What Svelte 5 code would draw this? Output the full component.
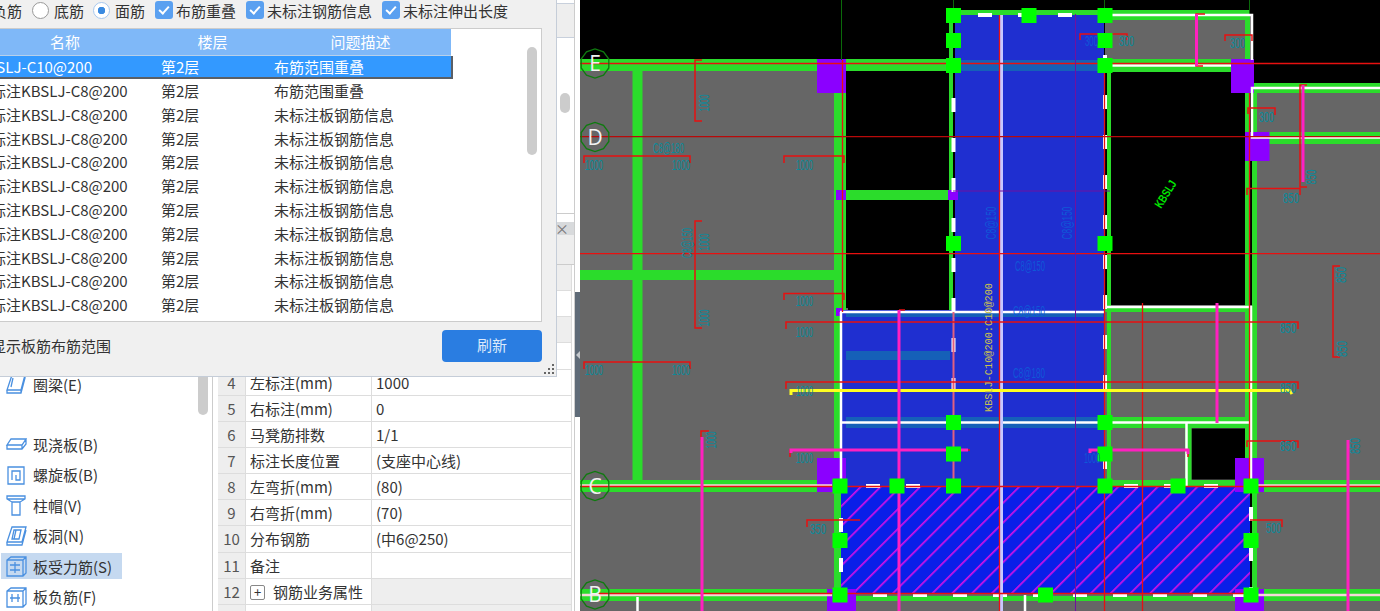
<script>
	const issues = [
		{ name: 'KBSLJ-C10@200', floor: '第2层', desc: '布筋范围重叠', active: true },
		{ name: '未标注KBSLJ-C8@200', floor: '第2层', desc: '布筋范围重叠' },
		...Array.from({ length: 9 }, () => ({ name: '未标注KBSLJ-C8@200', floor: '第2层', desc: '未标注板钢筋信息' }))
	];

	// rows 1-3 sit behind the dialog, only their stripes show
	const props = [
		{ no: '', name: '', value: '' },
		{ no: '', name: '', value: '', ro: true },
		{ no: '', name: '', value: '' },
		{ no: 4, name: '左标注(mm)', value: '1000' },
		{ no: 5, name: '右标注(mm)', value: '0' },
		{ no: 6, name: '马凳筋排数', value: '1/1' },
		{ no: 7, name: '标注长度位置', value: '(支座中心线)' },
		{ no: 8, name: '左弯折(mm)', value: '(80)' },
		{ no: 9, name: '右弯折(mm)', value: '(70)' },
		{ no: 10, name: '分布钢筋', value: '(中6@250)' },
		{ no: 11, name: '备注', value: '' },
		{ no: 12, name: '钢筋业务属性', value: '', group: true },
		{ no: '', name: '', value: '', group: true }
	];

	// canvas shapes are [x, y, w, h] in screen coordinates
	const gray = [
		[580, 60, 268, 551], [1105, 15, 147, 50], [1105, 305, 147, 181],
		[1252, 88, 128, 523], [840, 594, 540, 17]
	];
	const black = [[846, 71, 103, 237], [1111, 72, 134, 228], [1191.5, 428.5, 53.5, 51]];
	const bands = [[955, 60, 148, 11], [846, 351, 104, 9], [846, 417, 257, 11], [846, 312, 257, 5]];
	const green = [
		[580, 59, 368, 12], [632.5, 71, 10, 409], [580, 270, 254, 10], [834, 93, 12, 217], [834, 310, 7, 290],
		[846, 190, 103, 10], [949, 10, 4, 300], [580, 480, 237, 12], [580, 589, 247, 12],
		[1105, 10, 145, 10], [1245, 10, 5, 50], [1105, 59, 126, 13], [1107, 72, 4, 415],
		[1245, 93, 5, 393], [1252, 93, 5, 507], [1253, 83, 127, 10], [1269, 132, 111, 12], [1105, 306, 147, 6],
		[1111, 417, 134, 11], [1185, 428, 6.5, 55], [1105, 480, 147, 6], [1257, 480, 123, 12],
		[1257, 589, 123, 12], [953, 10, 152, 5], [856, 596, 400, 5]
	];
	const purple = [
		[817, 59, 29, 34], [836, 190, 10, 10], [948, 190, 10, 10], [1231, 59, 23, 34],
		[1245, 132, 24.5, 29], [817, 458, 29, 34], [827, 589, 29, 22], [1235, 458, 29, 34],
		[1235, 589, 29, 22], [836, 308, 6, 8]
	];
	const squares = [
		[953.5, 15.5], [1029, 15.5], [1105, 15.5], [953.5, 40.5], [1105, 40.5], [953.5, 65.5],
		[1105, 65.5], [953.5, 243.5], [1105, 243.5], [953.5, 422.5], [1105, 422.5], [953.5, 454],
		[1105, 454], [840, 486], [897, 486], [953.5, 486], [1105, 486], [1178, 486], [1251, 486],
		[840, 540.5], [1251, 540.5], [840, 595], [1045.5, 595], [1251, 595]
	];
	// red dimension brackets as polylines
	const brackets = [
		'702,60 695,60 695,121 702,121', '702,221 695,221 695,328 702,328',
		'584,163 584,156 690,156 690,163', '784,163 784,156 844,156 844,163',
		'784,300 784,293.5 844,293.5 844,300', '584,369 584,362 690,362 690,369',
		'786,329 786,322 1298,322 1298,329', '786,389 786,382 1298,382 1298,389',
		'807,527 807,520 860,520', '1250,520 1282,520 1282,527', '1247,447 1247,441 1298,441 1298,448',
		'1080,40 1080,34 1127,34 1127,40', '1225,41 1225,35 1252,35 1252,41',
		'1248,114 1248,108 1275,108 1275,115', '1247,195 1247,188.5 1300,188.5 1300,195',
		'1340,266 1333,266 1333,357 1340,357', '1307,85 1300,85 1300,187 1307,187',
		'1205,14 1196,14 1196,66 1203,66', '709,431 701,431 701,440', '905,310 899,310',
		'790,457 790,450 970,450', '1188,457 1188,450 1090,450'
	];
	const magenta = [
		'1196.5,14 1196.5,66', '1303,85 1303,182', '1217,303 1217,423', '1348,440 1348,611',
		'702,437 702,611', '899,310 899,611', '791,453 791,450 968,450', '1090,453 1090,450 1188,450 1188,454'
	];
	const labels = [
		{ t: 'C8@180', x: 653, y: 153, w: 31, c: 'teal' },
		{ t: '1000', x: 585, y: 170, w: 18, c: 'teal' },
		{ t: '1000', x: 672, y: 170, w: 18, c: 'teal' },
		{ t: '1000', x: 796, y: 170, w: 17, c: 'teal' },
		{ t: '1000', x: 796, y: 306, w: 17, c: 'teal' },
		{ t: '1000', x: 796, y: 337, w: 17, c: 'teal' },
		{ t: '1000', x: 585, y: 375, w: 18, c: 'teal' },
		{ t: '1000', x: 672, y: 375, w: 18, c: 'teal' },
		{ t: '1000', x: 796, y: 396, w: 17, c: 'teal' },
		{ t: '1000', x: 796, y: 463, w: 17, c: 'teal' },
		{ t: '350', x: 810, y: 534, w: 16, c: 'teal' },
		{ t: '300', x: 1119, y: 46, w: 15, c: 'teal' },
		{ t: '300', x: 1085, y: 46, w: 13, c: 'blue' },
		{ t: '300', x: 1230, y: 48, w: 15, c: 'teal' },
		{ t: '300', x: 1259, y: 122, w: 15, c: 'teal' },
		{ t: '850', x: 1283, y: 203, w: 16, c: 'teal' },
		{ t: '850', x: 1280, y: 333, w: 16, c: 'teal' },
		{ t: '850', x: 1280, y: 393, w: 16, c: 'teal' },
		{ t: '850', x: 1280, y: 451, w: 16, c: 'teal' },
		{ t: '500', x: 1266, y: 533, w: 15, c: 'teal' },
		{ t: 'C8@150', x: 1015, y: 271, w: 30, c: 'blue' },
		{ t: 'C8@180', x: 1013, y: 378, w: 32, c: 'blue' },
		{ t: 'C8@150', x: 1013, y: 316, w: 32, c: 'blue' },
		{ t: '1000', x: 1084, y: 463, w: 16, c: 'blue' }
	];
	const sideLabels = [
		{ t: '1000', cx: 704, cy: 103, w: 17, c: 'teal' },
		{ t: 'C8@150', cx: 687, cy: 243, w: 30, c: 'teal' },
		{ t: '1000', cx: 704, cy: 242, w: 17, c: 'teal' },
		{ t: '1000', cx: 704, cy: 318, w: 17, c: 'teal' },
		{ t: '1000', cx: 711, cy: 440, w: 17, c: 'teal' },
		{ t: '850', cx: 1311, cy: 177, w: 15, c: 'teal' },
		{ t: '850', cx: 1341, cy: 275, w: 16, c: 'teal' },
		{ t: '850', cx: 1342, cy: 349, w: 16, c: 'teal' },
		{ t: '850', cx: 1355, cy: 446, w: 16, c: 'teal' },
		{ t: 'C8@150', cx: 991, cy: 223, w: 33, c: 'blue' },
		{ t: 'C8@150', cx: 1067, cy: 223, w: 33, c: 'blue' }
	];
	const axes = [
		{ t: 'E', y: 63.5 },
		{ t: 'D', y: 137 },
		{ t: 'C', y: 486 },
		{ t: 'B', y: 594.5 }
	];

	const ring = (cy) =>
		Array.from({ length: 10 }, (_, i) => {
			const a = (i * Math.PI) / 5 + Math.PI / 10;
			return `${(595 + 14.5 * Math.cos(a)).toFixed(1)},${(cy + 14.5 * Math.sin(a)).toFixed(1)}`;
		}).join(' ');
</script>

{#snippet slab(d)}
	<svg class="nav-icon" viewBox="0 0 22 22" aria-hidden="true"><path d={d} /></svg>
{/snippet}

<div class="app">
	<div class="left">
		<aside class="sidebar">
			<div class="nav-item">
				{@render slab('M7 2h13l-4 15H2zM2 17v3h14l4-15v-3M16 17v3M8 5l-2 9')}
				<span>圈梁(E)</span>
			</div>
			<div class="nav-item gap">
				{@render slab('M6 6h15l-4 6H2zM2 12v4h15l4-5V6M17 12v4')}
				<span>现浇板(B)</span>
			</div>
			<div class="nav-item">
				{@render slab('M3 3h16v17H3zM7 16V7h8v9h-4v-5')}
				<span>螺旋板(B)</span>
			</div>
			<div class="nav-item">
				{@render slab('M2 2h18v3l-5 3v13H7V8L2 5zM2 5h18M7 8h8')}
				<span>柱帽(V)</span>
			</div>
			<div class="nav-item">
				{@render slab('M7 2h14l-4 15H2zM2 17v3h15l4-15M9 5h7l-2 9H7zM11 5l-2 9')}
				<span>板洞(N)</span>
			</div>
			<div class="nav-item active">
				{@render slab('M2 5l4-3h15v16l-3 3H2zM2 5h16v16M18 5l3-3M5 10h10M5 15h10M10 7v11')}
				<span>板受力筋(S)</span>
			</div>
			<div class="nav-item">
				{@render slab('M2 5l4-3h15v16l-3 3H2zM2 5h16v16M18 5l3-3M5 12h10M7 8v8M13 8v8')}
				<span>板负筋(F)</span>
			</div>
			<div class="nav-thumb"></div>
		</aside>

		<main class="main">
			<section class="top-panel">
				<div class="top-head"></div>
				<div class="top-body"><div class="top-thumb"></div></div>
			</section>
			<div class="dock-tab"><span>×</span></div>
			<div class="prop-tools"></div>
			<div class="prop-table">
				<div class="prop-row head">
					<div class="no"></div>
					<div class="name"></div>
					<div class="value"></div>
				</div>
				{#each props as row}
					<div class="prop-row" class:group={row.group} class:ro={row.ro}>
						<div class="no">{row.no}</div>
						<div class="name">
							{#if row.group}<span class="plus">+</span>{/if}{row.name}
						</div>
						<div class="value">{row.value}</div>
					</div>
				{/each}
			</div>
		</main>

		<div class="edge">
			<div class="splitter"><i></i></div>
		</div>

		<div class="dialog">
			<div class="opts">
				<span class="clip-label">负筋</span>
				<label class="opt"><i class="radio"></i>底筋</label>
				<label class="opt"><i class="radio on"></i>面筋</label>
				<label class="opt"><i class="check"></i>布筋重叠</label>
				<label class="opt"><i class="check"></i>未标注钢筋信息</label>
				<label class="opt"><i class="check"></i>未标注伸出长度</label>
			</div>

			<div class="issues">
				<div class="issue-row issue-head">
					<div>名称</div>
					<div>楼层</div>
					<div>问题描述</div>
				</div>
				{#each issues as it}
					<div class="issue-row" class:active={it.active}>
						<div class="cell-name">{it.name}</div>
						<div class="cell-floor">{it.floor}</div>
						<div class="cell-desc">{it.desc}</div>
					</div>
				{/each}
				<div class="issue-thumb"></div>
			</div>

			<div class="foot">
				<span class="hint">显示板筋布筋范围</span>
				<button class="refresh">刷新</button>
			</div>

			<svg class="grip" width="11" height="11" viewBox="0 0 11 11" aria-hidden="true">
				<rect x="8" y="0" width="2" height="2" />
				<rect x="4" y="4" width="2" height="2" />
				<rect x="8" y="4" width="2" height="2" />
				<rect x="0" y="8" width="2" height="2" />
				<rect x="4" y="8" width="2" height="2" />
				<rect x="8" y="8" width="2" height="2" />
			</svg>
		</div>
	</div>

	<svg class="cad" width="800" height="611" viewBox="580 0 800 611" aria-label="板筋平面图">
		<defs>
			<pattern id="hatch" width="14" height="14" patternUnits="userSpaceOnUse" patternTransform="rotate(-45 840 594)">
				<rect width="14" height="14" fill="#0a1fe8" />
				<rect x="0" y="0" width="14" height="1.7" fill="#d010e8" />
			</pattern>
		</defs>

		{#each gray as [x, y, w, h]}<rect {x} {y} width={w} height={h} fill="#666" />{/each}
		{#each black as [x, y, w, h]}<rect {x} {y} width={w} height={h} fill="#000" />{/each}

		<rect x="955" y="14" width="149" height="298" fill="#1f2fd0" />
		<rect x="842" y="310" width="263" height="176" fill="#1f2fd0" />
		{#each bands as [x, y, w, h]}<rect {x} {y} width={w} height={h} fill="#1560b8" />{/each}
		<rect x="841" y="486" width="409" height="108" fill="url(#hatch)" />

		{#each green as [x, y, w, h]}<rect {x} {y} width={w} height={h} fill="#2bdc2b" />{/each}
		{#each purple as [x, y, w, h]}<rect {x} {y} width={w} height={h} fill="#8b00ff" />{/each}

		<g class="thin-dark">
			<line x1="841.5" y1="0" x2="841.5" y2="60" />
			<line x1="953.5" y1="0" x2="953.5" y2="10" />
			<line x1="1104.5" y1="0" x2="1104.5" y2="10" />
			<line x1="1249.5" y1="0" x2="1249.5" y2="15" />
		</g>

		<g class="white">
			<polyline points="1105,15 1252,15 1252,60" />
			<line x1="1112" y1="65.5" x2="1231" y2="65.5" />
			<polyline points="1380,88 1252,88 1252,137.5 1380,137.5" />
			<polyline points="1105,307 1251,307 1251,486" />
			<line x1="1112" y1="422.5" x2="1251" y2="422.5" />
			<polyline points="1186.5,422.5 1186.5,486" />
			<line x1="840" y1="312" x2="1105" y2="312" />
			<line x1="841" y1="422.5" x2="1105" y2="422.5" />
			<line x1="841" y1="312" x2="841" y2="486" />
			<line x1="580" y1="485.5" x2="832" y2="485.5" class="soft" />
			<line x1="580" y1="595" x2="832" y2="595" class="soft" />
			<line x1="1258" y1="485.5" x2="1380" y2="485.5" class="soft" />
			<line x1="1258" y1="595" x2="1380" y2="595" class="soft" />
			<line x1="637.5" y1="597" x2="637.5" y2="611" />
			<line x1="1025" y1="595" x2="1025" y2="611" />
		</g>
		<g class="dash">
			<line x1="953.5" y1="58" x2="953.5" y2="312" />
			<line x1="1105" y1="55" x2="1105" y2="486" />
			<line x1="953.5" y1="338" x2="953.5" y2="415" />
			<line x1="978" y1="15" x2="1100" y2="15" />
			<line x1="841" y1="518" x2="841" y2="590" />
			<line x1="1251" y1="507" x2="1251" y2="590" />
			<line x1="866" y1="486" x2="925" y2="486" />
			<line x1="1124" y1="486" x2="1225" y2="486" />
			<line x1="873" y1="595" x2="1247" y2="595" />
		</g>

		<line x1="1001.5" y1="15" x2="1001.5" y2="611" class="lavender" />

		<g class="red-h">
			<line x1="580" y1="63.5" x2="1380" y2="63.5" />
			<line x1="580" y1="136.7" x2="1380" y2="136.7" class="deep" />
			<line x1="580" y1="253.7" x2="1380" y2="253.7" />
			<line x1="580" y1="486.5" x2="1380" y2="486.5" />
			<line x1="599" y1="593.5" x2="1250" y2="593.5" />
			<line x1="999.5" y1="15" x2="999.5" y2="611" />
			<line x1="1104.5" y1="65" x2="1104.5" y2="611" />
			<line x1="1142.5" y1="303" x2="1142.5" y2="611" />
			<line x1="842.5" y1="60" x2="842.5" y2="312" />
			<line x1="1249.5" y1="93" x2="1249.5" y2="486" />
			<line x1="953.5" y1="312" x2="953.5" y2="486" class="pink" />
		</g>
		<line x1="1075.5" y1="14" x2="1075.5" y2="611" class="violet" />
		<line x1="953" y1="191" x2="1110" y2="191" class="violet" />

		<polyline points="791,395 791,390.5 1290,390.5 1292,394" class="yellow" />

		{#each brackets as points}<polyline {points} class="bracket" />{/each}
		{#each magenta as points}<polyline {points} class="magenta" />{/each}

		{#each squares as [cx, cy]}
			<rect x={cx - 7.5} y={cy - 7.5} width="15" height="15" fill="#00ff00" />
		{/each}

		{#each labels as l}
			<text x={l.x} y={l.y} class="dim {l.c}" textLength={l.w} lengthAdjust="spacingAndGlyphs">{l.t}</text>
		{/each}
		{#each sideLabels as l}
			<text transform="translate({l.cx} {l.cy}) rotate(-90)" x={-l.w / 2} y="5" class="dim {l.c}" textLength={l.w} lengthAdjust="spacingAndGlyphs">{l.t}</text>
		{/each}

		<text transform="translate(992 412) rotate(-90)" class="rebar" textLength="129" lengthAdjust="spacingAndGlyphs">KBSLJ-C10@200:C10@200</text>
		<text transform="translate(1161 209) rotate(-58)" class="tag" textLength="30" lengthAdjust="spacingAndGlyphs">KBSLJ</text>

		{#each axes as a}
			<polygon points={ring(a.y)} class="axis-ring" />
			<text x="595" y={a.y + 7.5} class="axis">{a.t}</text>
		{/each}
	</svg>
</div>

<style>
	:global(body) {
		margin: 0;
	}

	.app {
		display: flex;
		width: 1380px;
		height: 611px;
		overflow: hidden;
		font-family: 'Noto Sans CJK SC', 'Liberation Sans', sans-serif;
		font-size: 15px;
		color: #333;
	}

	.left {
		position: relative;
		display: flex;
		flex: none;
		width: 580px;
		height: 611px;
		overflow: hidden;
		background: #fff;
	}

	.sidebar {
		position: relative;
		box-sizing: border-box;
		flex: none;
		width: 213px;
		padding-top: 371px;
		border-right: 1px solid #ccc;
	}

	.nav-item {
		display: flex;
		align-items: center;
		gap: 6px;
		width: 121px;
		height: 26px;
		margin: 0 0 4.5px 1px;
		padding-left: 4px;
		box-sizing: border-box;
		white-space: nowrap;
	}

	.nav-item.gap {
		margin-top: 34px;
	}

	.nav-item.active {
		background: #c5d9f0;
	}

	.nav-icon {
		flex: none;
		width: 22px;
		height: 22px;
		fill: none;
		stroke: #4a90e0;
		stroke-width: 1.3;
	}

	.nav-thumb {
		position: absolute;
		left: 198px;
		top: 340px;
		width: 10px;
		height: 75px;
		border-radius: 5px;
		background: #ccc;
	}

	.main {
		display: flex;
		flex-direction: column;
		flex: none;
		box-sizing: border-box;
		width: 362px;
		padding-left: 5px;
		border-right: 1px solid #ccc;
	}

	.top-panel {
		display: flex;
		flex-direction: column;
		flex: none;
		height: 214px;
		padding-top: 3px;
		box-sizing: border-box;
	}

	.top-head {
		height: 35px;
		flex: none;
		background: #eee;
		border-top: 1px solid #c8d0dc;
		border-bottom: 1px solid #c8d0dc;
		box-sizing: border-box;
	}

	.top-body {
		position: relative;
		flex: 1;
		border-bottom: 1px solid #ccc;
	}

	.top-thumb {
		position: absolute;
		right: 4px;
		top: 55px;
		width: 10px;
		height: 20px;
		border-radius: 5px;
		background: #ccc;
	}

	.dock-tab {
		display: flex;
		justify-content: flex-end;
		align-items: center;
		flex: none;
		height: 13px;
		margin-top: 8px;
		padding-right: 5px;
		background: #d8dadc;
		color: #777;
		font-size: 14px;
		line-height: 13px;
	}

	.prop-tools {
		flex: none;
		height: 30px;
		background: #eee;
		border-bottom: 1px solid #ccc;
		box-sizing: border-box;
	}

	.prop-table {
		width: 353px;
		border-right: 1px solid #ddd;
	}

	.prop-row {
		display: grid;
		grid-template-columns: 28px 126px 1fr;
		height: 26.15px;
		box-sizing: border-box;
		border-bottom: 1px solid #ddd;
		line-height: 25px;
		white-space: nowrap;
	}

	.prop-row.head,
	.prop-row.ro {
		background: #eee;
	}

	.prop-row.group .value {
		background: #eee;
	}

	.no {
		background: #eee;
		color: #555;
		text-align: center;
		border-right: 1px solid #ddd;
	}

	.name {
		padding-left: 4px;
		border-right: 1px solid #ddd;
	}

	.value {
		padding-left: 4px;
	}

	.plus {
		display: inline-block;
		width: 13px;
		height: 13px;
		margin: 0 8px 0 0;
		border: 1px solid #888;
		border-radius: 2px;
		font-size: 13px;
		line-height: 12px;
		text-align: center;
		vertical-align: 1px;
	}

	.edge {
		flex: none;
		width: 5px;
		background: #fff;
	}

	.splitter {
		display: flex;
		align-items: center;
		height: 125px;
		margin-top: 292px;
		background: #5f6b78;
	}

	.splitter i {
		width: 0;
		height: 0;
		margin-left: 1px;
		border-top: 4px solid transparent;
		border-bottom: 4px solid transparent;
		border-right: 4px solid #c4c8cc;
	}

	.dialog {
		position: absolute;
		left: 0;
		top: 0;
		display: flex;
		flex-direction: column;
		box-sizing: border-box;
		width: 557px;
		height: 377px;
		background: #f0f0f0;
		border-right: 1px solid #c5cdd8;
		border-bottom: 1px solid #c5cdd8;
		overflow: hidden;
	}

	.opts {
		display: flex;
		align-items: center;
		gap: 9px;
		flex: none;
		height: 20px;
		margin-bottom: 1px;
		margin-left: -8px;
		white-space: nowrap;
	}

	.clip-label {
		width: 30px;
		margin-right: 1px;
	}

	.opt {
		display: flex;
		align-items: center;
		gap: 5px;
	}

	.opt:has(.check) {
		gap: 3px;
		margin-left: 1px;
	}

	.radio {
		box-sizing: border-box;
		width: 17px;
		height: 17px;
		border: 1px solid #999;
		border-radius: 50%;
		background: #fff;
	}

	.radio.on {
		border-color: #a8c8ee;
		background: radial-gradient(circle, #3a8ae0 0 3.5px, #fff 4px);
	}

	.check {
		position: relative;
		width: 18px;
		height: 18px;
		border-radius: 3px;
		background: #5aa0f0;
	}

	.check::after {
		content: '';
		position: absolute;
		left: 6px;
		top: 3px;
		width: 4px;
		height: 8px;
		border: solid #fff;
		border-width: 0 2px 2px 0;
		transform: rotate(42deg);
	}

	.issues {
		position: relative;
		flex: none;
		box-sizing: border-box;
		width: 543px;
		height: 294px;
		margin: 7px 0 0 -1px;
		background: #fff;
		border: 1px solid #ccc;
		overflow: hidden;
	}

	.issue-row {
		display: grid;
		grid-template-columns: 180px 115px 181px;
		width: 476px;
		height: 23.8px;
		margin-left: -25px;
		line-height: 23.8px;
		white-space: nowrap;
	}

	.issue-head {
		height: 27px;
		line-height: 25px;
		background: #7fb8f8;
		color: #fff;
		text-align: center;
		border-bottom: 1px solid #b8d0ea;
		box-sizing: border-box;
	}

	.issue-row.active {
		width: 478px;
		height: 23px;
		background: #3399ff;
		color: #fff;
		box-sizing: border-box;
		border-right: 2px solid #5a5f66;
		border-bottom: 2px solid #5a5f66;
		line-height: 22px;
	}

	.issue-row.active .cell-name {
		padding-left: 2px;
	}

	.cell-name {
		padding-left: 1px;
	}

	.cell-floor {
		padding-left: 6px;
	}

	.cell-desc {
		padding-left: 4px;
	}

	.issue-thumb {
		position: absolute;
		left: 527px;
		top: 18px;
		width: 10px;
		height: 108px;
		border-radius: 5px;
		background: #ccc;
	}

	.foot {
		display: flex;
		align-items: center;
		justify-content: space-between;
		flex: none;
		width: 542px;
		height: 32px;
		margin-top: 8px;
	}

	.hint {
		margin: 0 0 2px -9px;
		white-space: nowrap;
	}

	.refresh {
		width: 100px;
		height: 32px;
		padding: 0 0 3px;
		border: 0;
		border-radius: 4px;
		background: #2a7de1;
		color: #dbe9fb;
		font: inherit;
	}

	.grip {
		position: absolute;
		right: 1px;
		bottom: 1px;
		fill: #666;
	}

	.cad {
		display: block;
		flex: none;
		background: #000;
	}

	.cad line,
	.cad polyline,
	.cad polygon {
		fill: none;
	}

	.thin-dark line {
		stroke: #0a6a0a;
		stroke-width: 1;
	}

	.white polyline,
	.white line {
		stroke: #fff;
		stroke-width: 2.5;
	}

	.white line.soft {
		stroke: #f4d8d8;
	}

	.dash line {
		stroke: #fff;
		stroke-width: 4;
		stroke-dasharray: 14 26;
	}

	.lavender {
		stroke: #c8c8ff;
		stroke-width: 3;
	}

	.red-h line {
		stroke: #e81010;
		stroke-width: 1.3;
	}

	.red-h line.deep {
		stroke: #b80a0a;
	}

	.red-h line.pink {
		stroke: #e06080;
		stroke-width: 2;
	}

	.violet {
		stroke: #7010a0;
		stroke-width: 1;
	}

	.yellow {
		stroke: #ffff20;
		stroke-width: 3;
	}

	.bracket {
		stroke: #e81010;
		stroke-width: 1.5;
	}

	.magenta {
		stroke: #ff20c0;
		stroke-width: 3;
	}

	.dim {
		font-family: 'Liberation Sans', sans-serif;
		font-size: 14px;
	}

	.dim.teal {
		fill: #0a8a9c;
	}

	.dim.blue {
		fill: #0f58d8;
	}

	.rebar {
		font-family: 'Liberation Mono', monospace;
		font-size: 10px;
		fill: #c8c050;
	}

	.tag {
		font-family: 'Liberation Sans', sans-serif;
		font-size: 12px;
		font-weight: 700;
		fill: #00e800;
	}

	.axis-ring {
		stroke: #0f7a0f;
		stroke-width: 1.3;
	}

	.axis {
		font-family: 'Open Sans', sans-serif;
		font-size: 21px;
		fill: #f2f2f2;
		text-anchor: middle;
	}
</style>
